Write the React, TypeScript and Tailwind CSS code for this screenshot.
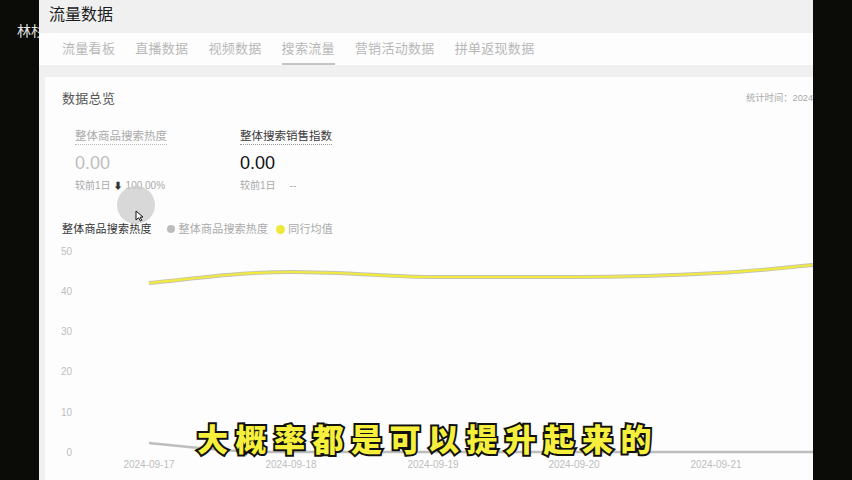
import React from "react";

const tabs = ["流量看板", "直播数据", "视频数据", "搜索流量", "营销活动数据", "拼单返现数据"];

const yTicks = [
    { label: "50", y: 255 },
    { label: "40", y: 295 },
    { label: "30", y: 335 },
    { label: "20", y: 375 },
    { label: "10", y: 416 },
    { label: "0", y: 456 },
];

const xTicks = [
    { label: "2024-09-17", x: 149 },
    { label: "2024-09-18", x: 291 },
    { label: "2024-09-19", x: 433 },
    { label: "2024-09-20", x: 574 },
    { label: "2024-09-21", x: 716 },
];

const peerPath =
    "M149,283 C200,278 240,272 291,272 C350,272 390,277 433,277 C490,277 530,277 575,277 C630,277 680,275 717,273 C760,271 790,267 813,265";

const TrendChart: React.FC = () => (
    <svg width="768" height="240" viewBox="45 240 768 240" className="block shrink-0">
        {yTicks.map((t) => (
            <text key={t.label} x="72" y={t.y} textAnchor="end" fontSize="10" fill="#bdbdbd" fontFamily="Liberation Sans, sans-serif">
                {t.label}
            </text>
        ))}
        {xTicks.map((t) => (
            <text key={t.label} x={t.x} y="468" textAnchor="middle" fontSize="10" fill="#bdbdbd" fontFamily="Liberation Sans, sans-serif">
                {t.label}
            </text>
        ))}
        {/* peer average */}
        <path d={peerPath} fill="none" stroke="#c4c4b4" strokeWidth="4" />
        <path d={peerPath} fill="none" stroke="#f2ea3c" strokeWidth="2.2" />
        {/* search heat */}
        <path d="M149,443 C190,447 220,452 291,452 L813,452" fill="none" stroke="#bdbdbd" strokeWidth="2.5" />
    </svg>
);

const App: React.FC = () => {
    return (
        <div className="relative flex h-[480px] w-[852px] overflow-hidden bg-[#0b0b07] font-['Liberation_Sans','Noto_Sans_CJK_SC',sans-serif]">
            <div className="relative w-[39px] shrink-0 overflow-hidden">
                <span className="absolute left-[17px] top-[23px] whitespace-nowrap text-[14px] leading-[16px] text-[#e6e6e6]">林杉</span>
            </div>

            <div className="flex w-[774px] shrink-0 flex-col overflow-hidden bg-[#f0f0f0]">
                <div className="flex h-[33px] shrink-0 items-center pl-[10px] pb-[4px]">
                    <span className="text-[16px] leading-[20px] text-[#1c1c1c]">流量数据</span>
                </div>

                <div className="flex h-[32px] shrink-0 items-stretch gap-[20px] bg-[#fdfdfd] pl-[23px]">
                    {tabs.map((t) => (
                        <div
                            key={t}
                            className={
                                t === "搜索流量"
                                    ? "flex items-center border-y-2 border-t-transparent border-b-[#c4c4c4] text-[13px] tracking-[0.3px] text-[#b8b8b8]"
                                    : "flex items-center border-y-2 border-transparent text-[13px] tracking-[0.3px] text-[#b8b8b8]"
                            }
                        >
                            {t}
                        </div>
                    ))}
                </div>

                <div className="h-[12px] shrink-0" />

                <div className="relative ml-[6px] flex flex-1 flex-col overflow-hidden bg-[#fdfdfd]">
                    <div className="flex h-[20px] items-center pl-[17px] mt-[12px]">
                        <span className="w-[684px] shrink-0 text-[13px] tracking-[0.3px] text-[#555]">数据总览</span>
                        <span className="shrink-0 whitespace-nowrap text-[9.3px] text-[#a8a8a8]">统计时间：2024</span>
                    </div>

                    <div className="mt-[20px] flex pl-[30px]">
                        <div className="flex w-[165px] flex-col">
                            <span className="self-start border-b border-dotted border-[#bbb] text-[11.5px] leading-[15px] text-[#aaa]">整体商品搜索热度</span>
                            <span className="mt-[7px] text-[18px] leading-[22px] text-[#bdbdbd]">0.00</span>
                            <span className="mt-[5px] flex items-center text-[10px] leading-[14px] text-[#aaa]">
                                较前1日
                                <span className="mx-[3px] text-[9px] text-[#333]">⬇</span>
                                100.00%
                            </span>
                        </div>
                        <div className="flex w-[165px] flex-col">
                            <span className="self-start border-b border-dotted border-[#999] text-[11.5px] leading-[15px] text-[#3a3a3a]">整体搜索销售指数</span>
                            <span className="mt-[7px] text-[18px] leading-[22px] text-[#111]">0.00</span>
                            <span className="mt-[5px] flex items-center text-[10px] leading-[14px] text-[#aaa]">
                                较前1日<span className="ml-[14px]">--</span>
                            </span>
                        </div>
                    </div>

                    <div className="mt-[28px] flex h-[16px] items-center pl-[17px] text-[11px] tracking-[0.2px]">
                        <span className="text-[#333]">整体商品搜索热度</span>
                        <span className="ml-[15px] h-[8px] w-[8px] rounded-full bg-[#bdbdbd]" />
                        <span className="ml-[4px] text-[#aaa]">整体商品搜索热度</span>
                        <span className="ml-[8px] h-[9px] w-[9px] rounded-full bg-[#f0e838]" />
                        <span className="ml-[3px] text-[#aaa]">同行均值</span>
                    </div>

                    <div className="mt-[3px] flex">
                        <TrendChart />
                    </div>

                    {/* click highlight + pointer */}
                    <div className="absolute left-[72px] top-[109px] h-[38px] w-[38px] rounded-full bg-[#c8c8c8]/70" />
                    <svg className="absolute left-[90px] top-[133px]" width="9" height="12" viewBox="0 0 9 12">
                        <path d="M1,1 L1,10 L3.5,7.8 L5.5,11 L6.8,10.3 L5,7.2 L8,7 Z" fill="#fff" stroke="#111" strokeWidth="1" />
                    </svg>
                </div>
            </div>

            <div className="flex-1" />

            <div className="absolute left-[197px] top-[419px] whitespace-nowrap font-['Noto_Sans_CJK_SC',sans-serif] text-[31px] font-black leading-[38px] tracking-[7.5px] text-[#f6f03c] [-webkit-text-stroke:4px_#111] [paint-order:stroke_fill]">
                大概率都是可以提升起来的
            </div>
        </div>
    );
};

export default App;
